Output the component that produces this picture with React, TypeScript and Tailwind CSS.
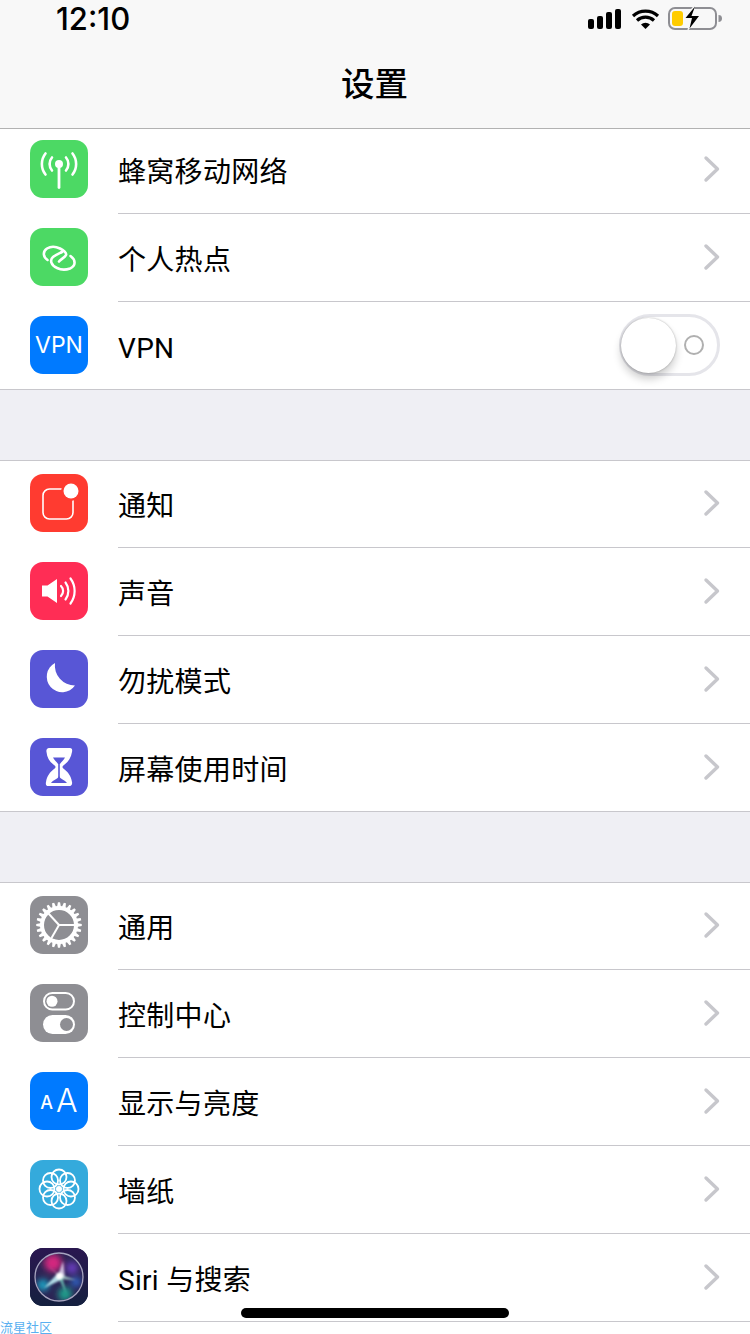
import type React from "react";

const FONT = "font-['Roboto','Noto_Sans_CJK_SC',sans-serif]";
const UI_FONT = "font-['Inter','Noto_Sans_CJK_SC',sans-serif]";

function gearPath(): string {
  const teeth = 24;
  const cx = 29;
  const cy = 29;
  const points: string[] = [];
  for (let i = 0; i < teeth; i++) {
    const step = (Math.PI * 2) / teeth;
    const a = i * step;
    const corners: [number, number][] = [
      [a - step * 0.36, 19],
      [a - step * 0.18, 22.8],
      [a + step * 0.18, 22.8],
      [a + step * 0.36, 19],
    ];
    for (const [ang, r] of corners) {
      points.push(
        `${(cx + Math.cos(ang) * r).toFixed(2)} ${(cy + Math.sin(ang) * r).toFixed(2)}`,
      );
    }
  }
  return `M${points.join("L")}Z M${cx - 15} ${cy}a15 15 0 1 0 30 0a15 15 0 1 0 -30 0Z`;
}

function AppIcon({
  color,
  children,
}: {
  color: string;
  children: React.ReactNode;
}): React.ReactNode {
  return (
    <div
      className={`mt-[14px] flex h-[58px] w-[58px] shrink-0 items-center justify-center overflow-hidden rounded-[13px] ${color}`}
    >
      {children}
    </div>
  );
}

function Glyph({ children }: { children: React.ReactNode }): React.ReactNode {
  return (
    <svg width="58" height="58" viewBox="0 0 58 58" fill="none">
      {children}
    </svg>
  );
}

function CellularIcon(): React.ReactNode {
  return (
    <Glyph>
      <circle cx="29" cy="24" r="4" fill="#fff" />
      <path d="M29 24V47.5" stroke="#fff" strokeWidth="2.8" strokeLinecap="round" />
      <g stroke="#fff" strokeWidth="2.6" strokeLinecap="round">
        <path d="M22 17.5a10 10 0 0 0 0 13" />
        <path d="M36 17.5a10 10 0 0 1 0 13" />
        <path d="M15.5 13.5a17 17 0 0 0 0 21" />
        <path d="M42.5 13.5a17 17 0 0 1 0 21" />
      </g>
    </Glyph>
  );
}

function HotspotIcon(): React.ReactNode {
  return (
    <Glyph>
      <g stroke="#fff" strokeWidth="2.6" strokeLinecap="round" strokeLinejoin="round">
        <path d="M17.5 32C13 29 12.5 23.5 17 20.5C21 18 26 18.5 30 20.5C33 22 37 25 36 27C35 29.5 31 31 29 33.5" />
        <path d="M40.5 28C46 32 46 38 40 40.5C36 42 31 42 27 40C21 37.5 19.5 32 23 29C25.5 27 29 25.5 32 24" />
      </g>
    </Glyph>
  );
}

function NotifyIcon(): React.ReactNode {
  return (
    <Glyph>
      <rect x="13" y="15" width="30" height="30" rx="6.5" stroke="#fff" strokeWidth="1.6" />
      <circle cx="41" cy="17" r="10" fill="#ff3b30" />
      <circle cx="41" cy="17" r="7.5" fill="#fff" />
    </Glyph>
  );
}

function SoundIcon(): React.ReactNode {
  return (
    <Glyph>
      <path d="M12 23.5h5.5L27 17v24l-9.5-6.5H12Z" fill="#fff" />
      <g stroke="#fff" strokeWidth="2.2" strokeLinecap="round">
        <path d="M31 24a7 7 0 0 1 0 10" />
        <path d="M35.5 20.5a14 14 0 0 1 0 17" />
        <path d="M40.5 16.5a21 21 0 0 1 0 25" />
      </g>
    </Glyph>
  );
}

function MoonIcon(): React.ReactNode {
  return (
    <Glyph>
      <path d="M25 13A15.5 15.5 0 1 0 45 35.5A20 20 0 0 1 25 13Z" fill="#fff" />
    </Glyph>
  );
}

function HourglassIcon(): React.ReactNode {
  return (
    <Glyph>
      <path
        d="M19 10H40C42 10 42.5 12 42 14C41 20 38 24 34 27C32 28 32 30 34 31C38 34 41 38 42 44C42.5 46 41.5 48 40 48H18C16 48 15.5 46 16 44C17 38 20 34 24 31C26 30 26 28 24 27C20 24 17 20 16.5 14C16 12 17 10 19 10Z"
        fill="#fff"
      />
      <path d="M23 19.5H35C34 22 31 24 30 26H28C27 24 24 22 23 19.5Z" fill="#5856d6" />
      <rect x="28.2" y="25" width="1.6" height="15" fill="#5856d6" />
      <path d="M29 38C30 41 35 42 37 45H21C23 42 28 41 29 38Z" fill="#5856d6" />
    </Glyph>
  );
}

function GearIcon(): React.ReactNode {
  return (
    <Glyph>
      <path d={gearPath()} fill="#fff" fillRule="evenodd" />
      <g stroke="#fff" strokeWidth="2">
        <path d="M29 29H45" />
        <path d="M29 29L18.5 17.5" />
        <path d="M29 29L21.5 42" />
      </g>
    </Glyph>
  );
}

function ControlsIcon(): React.ReactNode {
  return (
    <Glyph>
      <rect x="14" y="9" width="30" height="16.5" rx="8.25" stroke="#fff" strokeWidth="2" />
      <circle cx="22" cy="17.25" r="5.5" fill="#fff" />
      <rect x="13" y="31" width="32" height="19" rx="9.5" fill="#fff" />
      <circle cx="36.5" cy="40.5" r="6.5" fill="#8e8e93" />
    </Glyph>
  );
}

function WallpaperIcon(): React.ReactNode {
  const angles = [0, 45, 90, 135, 180, 225, 270, 315];
  return (
    <Glyph>
      <g stroke="#fff" strokeWidth="1.8">
        {angles.map((a) => (
          <circle
            key={a}
            cx={29 + Math.cos((a * Math.PI) / 180) * 12}
            cy={29 + Math.sin((a * Math.PI) / 180) * 12}
            r="7.5"
          />
        ))}
      </g>
      <circle cx="29" cy="29" r="3" fill="#fff" />
    </Glyph>
  );
}

function SiriIcon(): React.ReactNode {
  return (
    <svg width="58" height="58" viewBox="0 0 58 58" fill="none">
      <defs>
        <linearGradient id="siriBg" x1="0" y1="0" x2="0" y2="1">
          <stop offset="0" stopColor="#2a1750" />
          <stop offset="1" stopColor="#14203f" />
        </linearGradient>
        <clipPath id="siriClip">
          <circle cx="29" cy="29" r="23.5" />
        </clipPath>
        <filter id="siriSoft">
          <feGaussianBlur stdDeviation="3" />
        </filter>
        <filter id="siriRay">
          <feGaussianBlur stdDeviation="1" />
        </filter>
      </defs>
      <rect width="58" height="58" fill="url(#siriBg)" />
      <circle cx="29" cy="29" r="24" fill="#2b2454" />
      <g clipPath="url(#siriClip)">
        <g filter="url(#siriSoft)">
          <circle cx="23" cy="15" r="9" fill="#d4267f" />
          <circle cx="42" cy="20" r="6" fill="#6a3cc0" />
          <circle cx="13" cy="37" r="6" fill="#1aa3c4" />
          <circle cx="35" cy="46" r="7" fill="#1f9f8c" />
          <circle cx="46" cy="34" r="5" fill="#2f66c8" />
        </g>
        <g filter="url(#siriRay)">
          <path d="M28 27L33 13L35 29Z" fill="#f4e6ff" opacity="0.75" />
          <path d="M27 26L14 40L31 32Z" fill="#c8fbff" opacity="0.85" />
          <path d="M29 26L46 32L29 31Z" fill="#bfeee0" opacity="0.7" />
          <path d="M28 29L36 45L32 27Z" fill="#7fe8cf" opacity="0.7" />
          <path d="M30 29L17 17L27 25Z" fill="#f0a8d8" opacity="0.6" />
          <circle cx="29.5" cy="28" r="3.5" fill="#fff" />
        </g>
      </g>
      <circle cx="29" cy="29" r="24" stroke="#b5b3cc" strokeWidth="1.3" opacity="0.9" />
    </svg>
  );
}

function Chevron(): React.ReactNode {
  return (
    <svg width="18" height="28" viewBox="0 0 18 28" fill="none" className="mb-[2px] mr-[29px]">
      <path d="M3 3L14.5 14L3 25" stroke="#c7c7cc" strokeWidth="3.4" strokeLinecap="round" strokeLinejoin="round" />
    </svg>
  );
}

function VpnSwitch(): React.ReactNode {
  return (
    <div className="relative mb-[2px] mr-[30px] flex h-[62px] w-[101px] items-center justify-end rounded-full border-[3px] border-[#e5e5ea] pr-[13px]">
      <div className="h-[20px] w-[20px] rounded-full border-2 border-[#b0b0b0]" />
      <div className="absolute left-[-1px] top-[1px] h-[55px] w-[55px] rounded-full bg-white shadow-[0_6px_8px_rgba(0,0,0,0.2),0_0_2px_rgba(0,0,0,0.3)]" />
    </div>
  );
}

function Row({
  icon,
  label,
  trailing,
}: {
  icon: React.ReactNode;
  label: string;
  trailing?: React.ReactNode;
}): React.ReactNode {
  return (
    <div className="flex h-[88px] pl-[30px] first:-mt-px last:h-[87px] [&:last-child>div:last-child]:border-b-0">
      {icon}
      <div className="ml-[30px] flex flex-1 items-center justify-between border-b border-[#c8c7cc]">
        <span className="pt-[6px] text-[28px] leading-none tracking-[0.3px] text-black">{label}</span>
        {trailing ?? <Chevron />}
      </div>
    </div>
  );
}

function Group({ children }: { children: React.ReactNode }): React.ReactNode {
  return (
    <div className="mt-[70px] border-y border-[#c8c7cc] bg-white">{children}</div>
  );
}

function StatusBar(): React.ReactNode {
  return (
    <div className="flex h-[40px] items-center justify-between pl-[56px] pr-[28px]">
      <span className={`pb-[3px] text-[31px] font-medium leading-none text-black ${UI_FONT}`}>12:10</span>
      <svg width="134" height="32" viewBox="0 0 134 32" fill="none" className="mb-[7px]">
        <g fill="#000">
          <rect x="0" y="18" width="6" height="10" rx="2" />
          <rect x="9" y="15" width="6" height="13" rx="2" />
          <rect x="18" y="11" width="6" height="17" rx="2" />
          <rect x="27" y="8" width="6" height="20" rx="2" />
          <path d="M57.5 28L53 23.5a6.5 6.5 0 0 1 9 0Z" />
        </g>
        <g stroke="#000" strokeWidth="3.2" fill="none">
          <path d="M49 19.5a12.5 12.5 0 0 1 17 0" />
          <path d="M45 15a18.5 18.5 0 0 1 25 0" />
        </g>
        <rect x="81" y="7" width="47" height="21" rx="6" stroke="#8e8e93" strokeWidth="2" />
        <path d="M130.5 14v7a3.5 3.5 0 0 0 0-7Z" fill="#8e8e93" />
        <rect x="84" y="10" width="11" height="15" rx="3" fill="#ffcc00" />
        <path d="M108 2L95 18h7l-3 13 14-18h-8l3-11Z" fill="#f8f8f8" />
        <path d="M107 5.5L97.5 17h6.5l-2.5 10.5L111 15h-7.5Z" fill="#000" />
      </svg>
    </div>
  );
}

export default function App(): React.ReactNode {
  return (
    <div className={`relative h-[1334px] w-[750px] overflow-hidden bg-[#efeff4] ${FONT}`}>
      <header className="relative z-10 border-b border-[#b2b2b2] bg-[#f8f8f8]">
        <StatusBar />
        <div className={`flex h-[88px] items-center justify-center pr-[1px] pt-[2px] text-[33.5px] font-medium leading-none text-black ${UI_FONT}`}>
          设置
        </div>
      </header>

      <div className="-mt-[3px] border-b border-[#c8c7cc] bg-white">
        <Row icon={<AppIcon color="bg-[#4cd964]"><CellularIcon /></AppIcon>} label="蜂窝移动网络" />
        <Row icon={<AppIcon color="bg-[#4cd964]"><HotspotIcon /></AppIcon>} label="个人热点" />
        <Row
          icon={
            <AppIcon color="bg-[#007aff]">
              <span className={`pt-[1px] text-[23px] leading-none text-white ${UI_FONT}`}>VPN</span>
            </AppIcon>
          }
          label="VPN"
          trailing={<VpnSwitch />}
        />
      </div>

      <Group>
        <Row icon={<AppIcon color="bg-[#ff3b30]"><NotifyIcon /></AppIcon>} label="通知" />
        <Row icon={<AppIcon color="bg-[#ff2d55]"><SoundIcon /></AppIcon>} label="声音" />
        <Row icon={<AppIcon color="bg-[#5856d6]"><MoonIcon /></AppIcon>} label="勿扰模式" />
        <Row icon={<AppIcon color="bg-[#5856d6]"><HourglassIcon /></AppIcon>} label="屏幕使用时间" />
      </Group>

      <Group>
        <Row icon={<AppIcon color="bg-[#8e8e93]"><GearIcon /></AppIcon>} label="通用" />
        <Row icon={<AppIcon color="bg-[#8e8e93]"><ControlsIcon /></AppIcon>} label="控制中心" />
        <Row
          icon={
            <AppIcon color="bg-[#007aff]">
              <span className={`flex items-baseline gap-[3px] leading-none text-white ${UI_FONT}`}>
                <span className="-translate-y-[3px] text-[18px] font-medium">A</span>
                <span className="text-[32px] font-light">A</span>
              </span>
            </AppIcon>
          }
          label="显示与亮度"
        />
        <Row icon={<AppIcon color="bg-[#34aadc]"><WallpaperIcon /></AppIcon>} label="墙纸" />
        <Row icon={<AppIcon color="bg-[#15213f]"><SiriIcon /></AppIcon>} label="Siri 与搜索" />
        <div className="h-[20px] bg-white" />
      </Group>

      <div className="absolute bottom-[16px] left-[241px] h-[10px] w-[268px] rounded-full bg-black" />
      <span className="absolute bottom-0 left-0 text-[13px] leading-[13px] text-[#5ab0f0]">流星社区</span>
    </div>
  );
}
